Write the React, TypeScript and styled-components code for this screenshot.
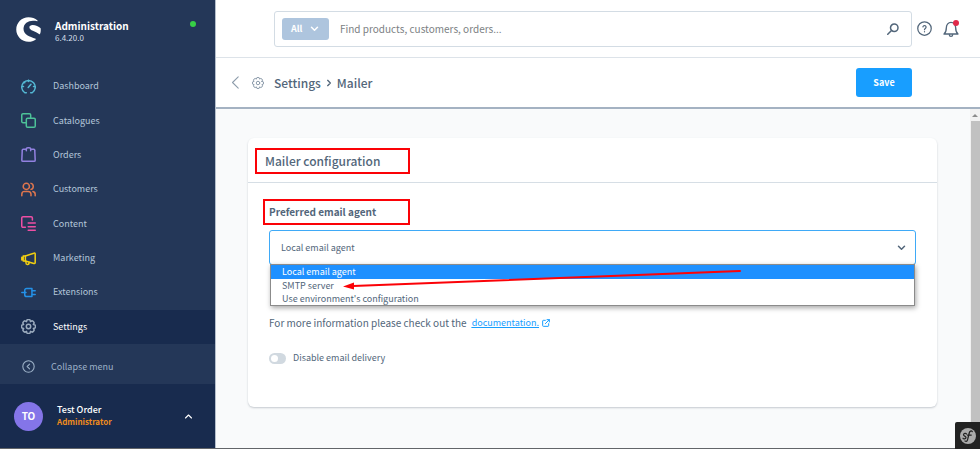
import React from "react";
import styled, { createGlobalStyle } from "styled-components";

const GlobalStyle = createGlobalStyle`
  *, *::before, *::after { box-sizing: border-box; }
  body {
    margin: 0;
    background: #f9fafb;
    color: #52667a;
    font-family: "Noto Sans CJK JP", "Noto Sans", sans-serif;
    font-size: 9px;
    line-height: 14px;
  }
  button, input, select { font: inherit; color: inherit; }
  h1, h2, p, ul { margin: 0; padding: 0; font: inherit; }
  ul { list-style: none; }
`;

/* ---------- icons ---------- */

type IconProps = { size: number; stroke?: string; width?: number; children: React.ReactNode };

const Glyph = styled.svg`
  display: block;
  flex: none;
  fill: none;
  stroke-linecap: round;
  stroke-linejoin: round;
`;

const Icon = ({ size, stroke = "currentColor", width = 2, children }: IconProps) => (
  <Glyph width={size} height={size} viewBox="0 0 24 24" stroke={stroke} strokeWidth={width} aria-hidden="true">
    {children}
  </Glyph>
);

const dashboard = (
  <>
    <path d="M8.500 22H6A10.800 10.800 0 1 1 18 22H15.500" />
    <path d="M11.500 13.500L16 8.500M12 2v2M2 12h2M20 12h2M5 5l1 1" />
  </>
);
const catalogues = (
  <>
    <path d="M8 15.500H3.200a2 2 0 0 1-2-2V3.200a2 2 0 0 1 2-2h10.300a2 2 0 0 1 2 2v5" />
    <rect x="8.500" y="8.500" width="14.300" height="14.300" rx="2" />
  </>
);
const orders = (
  <>
    <path d="M8.500 3.500H3.500a1.500 1.500 0 0 0-1.500 1.500L1.300 21a1.800 1.800 0 0 0 1.800 1.800h17.800a1.800 1.800 0 0 0 1.800-1.800L22 5a1.500 1.500 0 0 0-1.500-1.500h-5" />
    <path d="M8.500 6V3.500C8.500 2 9.500 1.200 11 1.200h2c1.500 0 2.500.800 2.500 2.300V6" />
  </>
);
const customers = (
  <>
    <circle cx="8.500" cy="7" r="5" />
    <path d="M1.300 22v-2.500A4.500 4.500 0 0 1 5.500 15h6a4.500 4.500 0 0 1 4.500 4.500V22" />
    <path d="M16 2.200a5 5 0 0 1 0 9.600M19 15.200a4.500 4.500 0 0 1 3.700 4.300V22" />
  </>
);
const content = (
  <>
    <path d="M7 18H3.200a2 2 0 0 1-2-2V3.200a2 2 0 0 1 2-2h13a2 2 0 0 1 2 2v3" />
    <path d="M11.500 11h11.300M11.500 17h11.300M11.500 22.800h11.300" />
  </>
);
const marketing = (
  <>
    <path d="M7 8L20.500 3.500a1.500 1.500 0 0 1 2.200 1.500v13.500a1.500 1.500 0 0 1-2.200 1.400L7 16z" />
    <path d="M7 8H3.500v8H7M1.300 10v4.500M8 16.500V19a2.500 2.500 0 0 0 5 .5v-1.500" />
  </>
);
const extensions = (
  <>
    <path d="M9 5.500h8.500v13H9a3 3 0 0 1-3-3v-7a3 3 0 0 1 3-3z" />
    <path d="M1.300 12H8M18 9h4.700M18 15h4.700" />
  </>
);

/* Eight rounded teeth: inner and outer points alternate around the centre. */
const gearOutline = (() => {
  const at = (deg: number, r: number) => {
    const a = (deg * Math.PI) / 180;
    return `${(12 + r * Math.cos(a)).toFixed(2)} ${(12 + r * Math.sin(a)).toFixed(2)}`;
  };
  let d = `M${at(-22, 8.4)}`;
  for (let i = 0; i < 8; i += 1) {
    const c = i * 45;
    d += `L${at(c - 13, 10.8)}Q${at(c, 11.8)} ${at(c + 13, 10.8)}L${at(c + 22, 8.4)}`;
  }
  return `${d}Z`;
})();
const gear = (
  <>
    <path d={gearOutline} />
    <circle cx="12" cy="12" r="3.500" />
  </>
);
const collapse = (
  <>
    <circle cx="12" cy="12" r="10.500" />
    <path d="M14 7.500L9.500 12l4.500 4.500" />
  </>
);
const chevronDown = <path d="M4 8.500l8 8 8-8" />;
const chevronUp = <path d="M4 16l8-8 8 8" />;
const chevronLeft = <path d="M17 1.500L6.500 12 17 22.500" />;
const chevronRight = <path d="M8 4l8 8-8 8" />;
const search = (
  <>
    <circle cx="14.500" cy="9.500" r="7.500" />
    <path d="M9 15l-7.500 7.500" />
  </>
);
const help = (
  <>
    <circle cx="12" cy="12" r="10.800" />
    <path d="M9.500 9.500a2.500 2.500 0 1 1 4 2.300C12.500 12.500 12 12.800 12 13.800M12 17v.300" />
  </>
);
const bell = (
  <>
    <path d="M1.500 19.500h21C20 17.500 19 14 19 10a7 8 0 0 0-14 0c0 4-1 7.500-3.500 9.500z" />
    <path d="M9.500 20.500a2.500 2.500 0 0 0 5 0" />
  </>
);
const external = (
  <>
    <path d="M10 4H4a2 2 0 0 0-2 2v14a2 2 0 0 0 2 2h14a2 2 0 0 0 2-2v-6" />
    <path d="M15 2h7v7M22 2L10 14" />
  </>
);

const ShopLogo = () => (
  <Glyph width={25} height={25} viewBox="0 0 50 50" aria-hidden="true">
    <path
      fill="#fff"
      d="M43 7C38 2.500 32 .500 25 .500C11.500 .500 .500 11.500 .500 25S11.500 49.500 25 49.500c5.500 0 10.500-1.700 14.500-4.700.4-.4.300-.9-.2-1.100C27 39 15 35.500 15 23.500C15 13 24 7.500 34 7.500c3 0 5.500.3 8.600.8.700.1 1-.8.400-1.300z"
    />
    <path
      fill="#fff"
      d="M49.300 22.500c-4-3-10-6.500-16-6.500-4 0-6.500 2-6.500 4.500 0 7 12 7.500 20 14 .5.400 1 .2 1.200-.4 1.500-3.600 1.800-7.500 1.300-11.600z"
    />
  </Glyph>
);

/* ---------- shell ---------- */

const Shell = styled.div`
  display: flex;
  height: 100vh;
  overflow: hidden;
  border-bottom: 1px solid #626569;
`;

const Sidebar = styled.aside`
  display: flex;
  flex-direction: column;
  flex: none;
  width: 215px;
  background: #243758;
  color: #b3c6d8;
`;

const Brand = styled.header`
  display: flex;
  align-items: flex-start;
  gap: 14px;
  flex: none;
  height: 69px;
  padding: 17px 19px 0 16px;
`;

const BrandText = styled.div`
  flex: 1;
  padding-top: 2px;
`;

const BrandName = styled.div`
  color: #fff;
  font-size: 10px;
  font-weight: 700;
`;

const Version = styled.div`
  font-size: 8px;
  line-height: 10px;
  color: #d5dfe9;
`;

const Online = styled.span`
  width: 6px;
  height: 6px;
  margin-top: 4px;
  border-radius: 50%;
  background: #37d046;
`;

const Nav = styled.nav`
  display: flex;
  flex-direction: column;
  flex: 1;
  min-height: 0;
`;

const NavLink = styled.a<{ $active?: boolean }>`
  display: flex;
  align-items: center;
  gap: 17px;
  flex: 0 1 35px;
  min-height: 0;
  padding-left: 21px;
  text-decoration: none;
  color: ${(p) => (p.$active ? "#fff" : "inherit")};
  background: ${(p) => (p.$active ? "#182b4e" : "transparent")};
`;

const Collapse = styled.button`
  display: flex;
  align-items: center;
  gap: 16px;
  flex: none;
  height: 40px;
  padding: 5px 0 0 22px;
  border: 0;
  background: none;
  color: #9db2c8;
  cursor: pointer;
`;

const User = styled.button`
  display: flex;
  align-items: center;
  gap: 14px;
  flex: none;
  height: 64px;
  padding: 0 22px 0 14px;
  border: 0;
  background: #182b4e;
  color: #fff;
  text-align: left;
  cursor: pointer;
`;

const Avatar = styled.span`
  display: grid;
  place-items: center;
  width: 29px;
  height: 29px;
  border-radius: 50%;
  background: #8475e8;
  font-size: 10px;
  font-weight: 700;
`;

const UserText = styled.span`
  display: grid;
  flex: 1;
  font-weight: 500;
  line-height: 12px;
`;

const Role = styled.span`
  color: #f08c1c;
  font-size: 8px;
  font-weight: 700;
`;

const Page = styled.div`
  display: flex;
  flex-direction: column;
  flex: 1;
  min-width: 0;
  border-left: 1px solid #b5bfcc;
`;

/* ---------- top bars ---------- */

const TopBar = styled.header`
  display: flex;
  align-items: center;
  flex: none;
  height: 58px;
  padding: 0 21px 0 58px;
  gap: 5px;
  border-bottom: 1px solid #dde3e9;
  background: #fff;
`;

const Actions = styled.div`
  display: flex;
  align-items: center;
  gap: 11px;
`;

const SearchBox = styled.form`
  display: flex;
  align-items: center;
  flex: 1;
  height: 36px;
  padding: 0 12px 0 7px;
  border: 1px solid #d3dce4;
  border-radius: 3px;
`;

const Scope = styled.button`
  display: flex;
  align-items: center;
  justify-content: space-between;
  width: 47px;
  height: 22px;
  padding: 0 10px 0 9px;
  border: 0;
  border-radius: 3px;
  background: #aec5de;
  color: #fff;
  font-weight: 700;
`;

const SearchInput = styled.input`
  flex: 1;
  min-width: 0;
  margin-left: 11px;
  padding: 0;
  border: 0;
  outline: 0;
  background: none;
  font-size: 10px;
  &::placeholder { color: #7c7f83; opacity: 1; }
`;

const IconButton = styled.button`
  position: relative;
  display: grid;
  padding: 0;
  border: 0;
  background: none;
  color: #52667a;
  cursor: pointer;
`;

const Unread = styled.span`
  position: absolute;
  top: -1px;
  right: 0;
  width: 6px;
  height: 6px;
  border-radius: 50%;
  background: #e0294a;
`;

const SmartBar = styled.div`
  display: flex;
  align-items: center;
  flex: none;
  height: 51px;
  padding: 0 68px 0 13px;
  gap: 10px;
  border-bottom: 2px solid #a4b2c2;
  background: #fff;
  color: #8d9cab;
`;

const Crumbs = styled.h1`
  display: flex;
  align-items: center;
  flex: 1;
  gap: 4px;
  color: #52667a;
  font-size: 12px;
  font-weight: 500;
  line-height: 18px;
`;

const Save = styled.button`
  width: 56px;
  height: 29px;
  padding: 0;
  border: 0;
  border-radius: 3px;
  background: #189eff;
  color: #fff;
  font-weight: 700;
  cursor: pointer;
`;

/* ---------- content ---------- */

const Workspace = styled.div`
  display: flex;
  flex: 1;
  min-height: 0;
`;

const Scroller = styled.main`
  flex: 1;
  min-width: 0;
  padding: 29px 33px 40px 32px;
  background: #f9fafb;
`;

const ScrollTrack = styled.div`
  display: flex;
  flex-direction: column;
  align-items: center;
  width: 10px;
  background: #f1f1f1;
`;

const ScrollArrow = styled.span`
  margin: 5px 0 4px;
  border: 3px solid transparent;
  border-top: 0;
  border-bottom-color: #8b8b8b;
`;

const ScrollThumb = styled.div`
  flex: 1;
  width: 9px;
  background: #c1c1c1;
`;

const Card = styled.section`
  border-radius: 6px;
  background: #fff;
  box-shadow: 0 1px 2px rgba(60, 75, 95, 0.28);
`;

const CardHeader = styled.header`
  padding: 15px 17px 13px;
  border-bottom: 1px solid #d6dee5;
`;

const CardTitle = styled.h2`
  position: relative;
  font-size: 12px;
  font-weight: 500;
  line-height: 16px;
`;

const CardBody = styled.div`
  padding: 21px 21px 42px;
`;

const Highlight = styled.span<{ $left: number; $width: number }>`
  position: absolute;
  top: -5px;
  left: ${(p) => p.$left}px;
  width: ${(p) => p.$width}px;
  height: 26px;
  border: 2px solid #fb0207;
  pointer-events: none;
`;

const FieldLabel = styled.label`
  position: relative;
  display: block;
  margin-bottom: 10px;
  font-size: 10px;
  font-weight: 700;
  line-height: 16px;
`;

const SelectWrap = styled.div`
  position: relative;
`;

const Select = styled.select`
  display: block;
  width: 100%;
  height: 35px;
  padding: 0 11px;
  border: 1px solid #3faaf7;
  border-radius: 3px;
  outline: 0;
  background: #fff;
  appearance: none;
`;

const SelectArrow = styled.span`
  position: absolute;
  top: 13px;
  right: 10px;
  pointer-events: none;
`;

const Options = styled.ul`
  position: absolute;
  z-index: 1;
  top: 34px;
  left: 1px;
  right: 1px;
  border: 1px solid #8b8b8b;
  background: #fff;
  box-shadow: 1px 2px 5px rgba(0, 0, 0, 0.35);
`;

const Option = styled.li<{ $selected?: boolean }>`
  padding-left: 11px;
  color: ${(p) => (p.$selected ? "#fff" : "#52667a")};
  background: ${(p) => (p.$selected ? "#1e90ff" : "transparent")};
  &:last-child { line-height: 12px; }
`;

const Pointer = styled.svg`
  position: absolute;
  z-index: 2;
  top: 36px;
  left: 74px;
  pointer-events: none;
`;

const Info = styled.p`
  display: flex;
  align-items: center;
  margin-top: 50px;
  font-size: 10px;
  line-height: 16px;
`;

const DocLink = styled.a`
  display: flex;
  align-items: center;
  gap: 3px;
  margin-left: 5px;
  color: #189eff;
  font-size: 9px;
  span { text-decoration: underline; }
`;

const SwitchRow = styled.label`
  display: flex;
  align-items: center;
  gap: 7px;
  margin-top: 20px;
`;

const Switch = styled.input`
  appearance: none;
  display: flex;
  align-items: center;
  width: 17px;
  height: 11px;
  margin: 0;
  padding: 0 2px;
  border-radius: 6px;
  background: #d1d9e0;
  &::before {
    content: "";
    width: 7px;
    height: 7px;
    border-radius: 50%;
    background: #fff;
  }
`;

const DebugButton = styled.button`
  position: fixed;
  right: 0;
  bottom: 0;
  z-index: 3;
  display: grid;
  place-items: center;
  width: 25px;
  height: 27px;
  padding: 0;
  border: 0;
  border-radius: 2px 0 0 0;
  background: #222;
`;

const navItems = [
  { label: "Dashboard", icon: dashboard, color: "#54b7d3" },
  { label: "Catalogues", icon: catalogues, color: "#4dc298" },
  { label: "Orders", icon: orders, color: "#9281e0" },
  { label: "Customers", icon: customers, color: "#e0764e" },
  { label: "Content", icon: content, color: "#ee4fa4" },
  { label: "Marketing", icon: marketing, color: "#f2cf10" },
  { label: "Extensions", icon: extensions, color: "#2491e8" },
  { label: "Settings", icon: gear, color: "#9aaabd", active: true },
];

const agents = ["Local email agent", "SMTP server", "Use environment's configuration"];

export default function App() {
  return (
    <>
      <GlobalStyle />
      <Shell>
        <Sidebar>
          <Brand>
            <ShopLogo />
            <BrandText>
              <BrandName>Administration</BrandName>
              <Version>6.4.20.0</Version>
            </BrandText>
            <Online />
          </Brand>
          <Nav>
            {navItems.map((item) => (
              <NavLink key={item.label} href="#" $active={item.active}>
                <Icon size={15} width={2.4} stroke={item.color}>{item.icon}</Icon>
                {item.label}
              </NavLink>
            ))}
          </Nav>
          <Collapse type="button">
            <Icon size={13}>{collapse}</Icon>
            Collapse menu
          </Collapse>
          <User type="button">
            <Avatar>TO</Avatar>
            <UserText>
              <span>Test Order</span>
              <Role>Administrator</Role>
            </UserText>
            <Icon size={9} width={3}>{chevronUp}</Icon>
          </User>
        </Sidebar>

        <Page>
          <TopBar>
            <SearchBox>
              <Scope type="button">
                All
                <Icon size={9} width={4}>{chevronDown}</Icon>
              </Scope>
              <SearchInput aria-label="Search" placeholder="Find products, customers, orders..." />
              <IconButton type="button" aria-label="Search">
                <Icon size={12} width={3}>{search}</Icon>
              </IconButton>
            </SearchBox>
            <Actions>
              <IconButton type="button" aria-label="Help">
                <Icon size={15}>{help}</Icon>
              </IconButton>
              <IconButton type="button" aria-label="Notifications">
                <Icon size={16}>{bell}</Icon>
                <Unread />
              </IconButton>
            </Actions>
          </TopBar>

          <SmartBar>
            <IconButton type="button" aria-label="Back">
              <Icon size={13} stroke="#8d9cab">{chevronLeft}</Icon>
            </IconButton>
            <Icon size={12}>{gear}</Icon>
            <Crumbs>
              Settings
              <Icon size={8} width={4}>{chevronRight}</Icon>
              Mailer
            </Crumbs>
            <Save type="button">Save</Save>
          </SmartBar>

          <Workspace>
            <Scroller>
              <Card>
                <CardHeader>
                  <CardTitle>
                    Mailer configuration
                    <Highlight $left={-10} $width={155} />
                  </CardTitle>
                </CardHeader>
                <CardBody>
                  <FieldLabel htmlFor="agent">
                    Preferred email agent
                    <Highlight $left={-6} $width={147} />
                  </FieldLabel>
                  <SelectWrap>
                    <Select id="agent" defaultValue={agents[0]}>
                      {agents.map((agent) => (
                        <option key={agent}>{agent}</option>
                      ))}
                    </Select>
                    <SelectArrow>
                      <Icon size={9} width={4}>{chevronDown}</Icon>
                    </SelectArrow>
                    <Options role="listbox" aria-label="Preferred email agent">
                      {agents.map((agent, i) => (
                        <Option key={agent} role="option" aria-selected={i === 0} $selected={i === 0}>
                          {agent}
                        </Option>
                      ))}
                    </Options>
                    <Pointer width="400" height="26" viewBox="0 0 400 26" aria-hidden="true">
                      <path d="M397 5L10 20" stroke="#fb0207" strokeWidth="2" strokeLinecap="round" />
                      <path d="M0 20.500L11 16.500V23.500z" fill="#fb0207" />
                    </Pointer>
                  </SelectWrap>
                  <Info>
                    For more information please check out the
                    <DocLink href="#">
                      <span>documentation.</span>
                      <Icon size={8} width={3}>{external}</Icon>
                    </DocLink>
                  </Info>
                  <SwitchRow>
                    <Switch type="checkbox" role="switch" />
                    Disable email delivery
                  </SwitchRow>
                </CardBody>
              </Card>
            </Scroller>
            <ScrollTrack>
              <ScrollArrow />
              <ScrollThumb />
            </ScrollTrack>
          </Workspace>
        </Page>
      </Shell>
      <DebugButton type="button" aria-label="Debug toolbar">
        <svg width="16" height="16" viewBox="0 0 32 32" aria-hidden="true">
          <circle cx="16" cy="16" r="16" fill="#aaa" />
          <path
            d="M13 12c-1-2-6-1.500-6 1.500 0 3 5 2.500 5 5.500 0 3-5 3.500-6 1.500M10 26c4 2 5-1 6-6l2.500-10c1-4 4-5 6-3M15 14h7.500"
            fill="none"
            stroke="#222"
            strokeWidth="2.500"
            strokeLinecap="round"
          />
        </svg>
      </DebugButton>
    </>
  );
}
